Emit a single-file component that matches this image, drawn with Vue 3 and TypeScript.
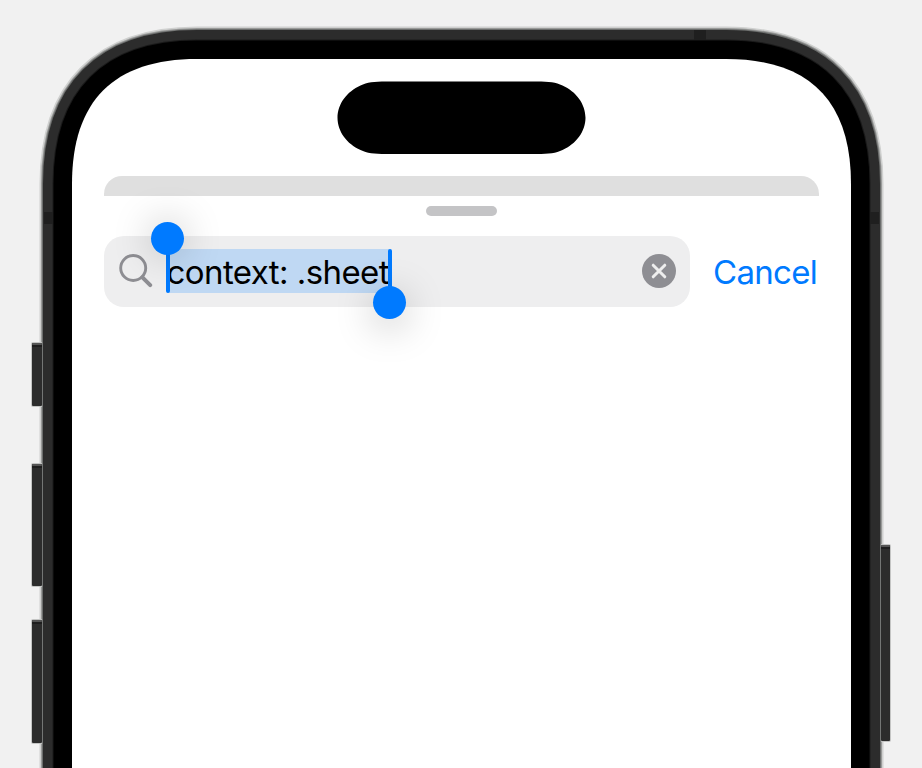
<script setup lang="ts">
import { ref } from 'vue'

const query = ref('context: .sheet')

/* Smoothed-corner outline of the display; the bezel and frame are stroked around it. */
const left = 72
const right = 851
const top = 59
const bottom = 900
const reach = 125
const pull = 41.8

const outline = [
  `M${left} ${bottom}`,
  `V${top + reach}`,
  `C${left} ${top + pull} ${left + pull} ${top} ${left + reach} ${top}`,
  `H${right - reach}`,
  `C${right - pull} ${top} ${right} ${top + pull} ${right} ${top + reach}`,
  `V${bottom}Z`,
].join('')

const layers = [
  { width: 65, color: '#cfd0cf' },
  { width: 62, color: '#999a99' },
  { width: 60, color: '#6c6e6d' },
  { width: 58, color: '#2c2c2c' },
  { width: 39, color: '#1a1a1a' },
  { width: 37, color: '#000000' },
]

const buttons = [
  { x: 32, edge: 31, w: 10, y: 343, h: 63 },
  { x: 32, edge: 31, w: 10, y: 464, h: 122 },
  { x: 32, edge: 31, w: 10, y: 620, h: 123 },
  { x: 881, edge: 880, w: 9, y: 545, h: 196 },
]
</script>

<template>
  <main class="stage">
    <svg class="device" viewBox="0 0 922 768" aria-hidden="true">
      <path
        v-for="l in layers"
        :key="l.width"
        :d="outline"
        fill="#fff"
        :stroke="l.color"
        :stroke-width="l.width"
        stroke-linejoin="round"
      />
      <path :d="outline" fill="#fff" />
      <g v-for="k in buttons" :key="`${k.x}-${k.y}`">
        <rect :x="k.edge" :y="k.y - 1" :width="k.w + 2" :height="k.h + 2" rx="2" fill="#c4c5c4" />
        <rect :x="k.edge < 400 ? 42 : 880" :y="k.y - 1" width="1" :height="k.h + 2" fill="#747675" />
        <rect :x="k.x" :y="k.y" :width="k.w" :height="k.h" rx="1" fill="#2c2c2c" />
        <rect :x="k.x" :y="k.y" :width="k.w" height="2" rx="1" fill="#555" />
        <rect :x="k.x" :y="k.y + 2" :width="k.w" height="2" fill="#1e1e1e" />
      </g>
      <rect x="694" y="30" width="12" height="10" fill="#1f1f1f" />
      <rect x="44" y="212" width="9" height="12" fill="#1f1f1f" />
      <rect x="870" y="212" width="9" height="12" fill="#1f1f1f" />
      <path
        d="M386 81.500H537C549 81.500 556 82.300 562.500 85.500C576 91.500 585.500 104 585.500 117.750C585.500 131.500 576 144 562.500 150C556 153.200 549 154 537 154H386C374 154 367 153.200 360.500 150C347 144 337.500 131.500 337.500 117.750C337.500 104 347 91.500 360.500 85.500C367 82.300 374 81.500 386 81.500Z"
        fill="#000"
      />
    </svg>

    <section class="screen">
      <div class="card-behind"></div>
      <div class="grabber"></div>
      <div class="search-row">
        <div class="field">
          <svg class="glass" viewBox="0 0 34 34">
            <circle cx="14.200" cy="14" r="12.500" />
            <path d="M23.400 23.300L31.200 31.100" class="handle" />
          </svg>
          <div class="selection">
            <span class="query">{{ query }}</span>
            <i class="caret start"></i>
            <i class="caret end"></i>
            <i class="knob start"></i>
            <i class="knob end"></i>
          </div>
          <button class="clear" aria-label="Clear">
            <svg viewBox="0 0 34 34">
              <circle cx="17" cy="17" r="17" fill="#8e8e93" />
              <path d="M11.200 11.200L22.800 22.800M22.800 11.200L11.200 22.800" stroke="#eee" stroke-width="3" stroke-linecap="round" />
            </svg>
          </button>
        </div>
        <button class="cancel">Cancel</button>
      </div>
    </section>
  </main>
</template>

<style>
body {
  background: #f1f1f1;
  overflow: hidden;
}
</style>

<style scoped>
.stage {
  display: grid;
  width: 922px;
  height: 768px;
  overflow: hidden;
  background: #f1f1f1;
  font-family: Inter, 'Liberation Sans', sans-serif;
}
.device,
.screen {
  grid-area: 1 / 1;
}
.device {
  display: block;
  width: 922px;
  height: 768px;
}
.screen {
  z-index: 1;
  display: flex;
  flex-direction: column;
  align-items: center;
  width: 715px;
  padding: 176px 103px 0 104px;
}
.card-behind {
  width: 715px;
  height: 19.500px;
  border-radius: 18px 18px 0 0;
  background: #dfdfdf;
}
.grabber {
  width: 71px;
  height: 10px;
  margin-top: 10px;
  border-radius: 5px;
  background: #c4c4c6;
}
.search-row {
  display: flex;
  align-items: center;
  width: 715px;
  height: 71px;
  margin-top: 20px;
}
.field {
  display: flex;
  align-items: center;
  box-sizing: border-box;
  width: 586px;
  height: 71px;
  padding: 0 14px 0 15px;
  border-radius: 20px;
  background: #eeeeef;
}
.glass {
  width: 34px;
  height: 34px;
  fill: none;
  stroke: #8e8e93;
  stroke-width: 2.900;
  stroke-linecap: round;
}
.glass .handle {
  stroke-width: 4;
}
.selection {
  position: relative;
  width: 222px;
  height: 43.500px;
  margin-left: 14px;
  background: #bfd8f3;
}
.query {
  display: block;
  color: #000;
  font-size: 33px;
  line-height: 46px;
  letter-spacing: -0.570px;
  text-indent: -0.500px;
  white-space: nowrap;
}
.caret {
  position: absolute;
  top: 0;
  width: 4px;
  height: 43.500px;
  border-radius: 2px;
  background: #007aff;
}
.caret.start {
  left: -1px;
}
.caret.end {
  right: -2.500px;
}
.knob {
  position: absolute;
  width: 33px;
  height: 33px;
  border-radius: 50%;
  background: #007aff;
}
.knob.start {
  top: -27px;
  left: -16px;
  box-shadow: 0 0 38px rgba(0, 0, 0, 0.25);
}
.knob.end {
  top: 37px;
  right: -17px;
  box-shadow: 0 8px 38px rgba(0, 0, 0, 0.25);
}
button {
  padding: 0;
  border: 0;
  background: none;
  font-family: inherit;
}
.clear {
  width: 34px;
  height: 34px;
  margin-left: auto;
}
.clear svg {
  display: block;
  width: 34px;
  height: 34px;
}
.cancel {
  margin-top: 2px;
  margin-left: 23px;
  color: #007aff;
  font-size: 33px;
  line-height: 45px;
  letter-spacing: -0.700px;
  white-space: nowrap;
}
</style>
